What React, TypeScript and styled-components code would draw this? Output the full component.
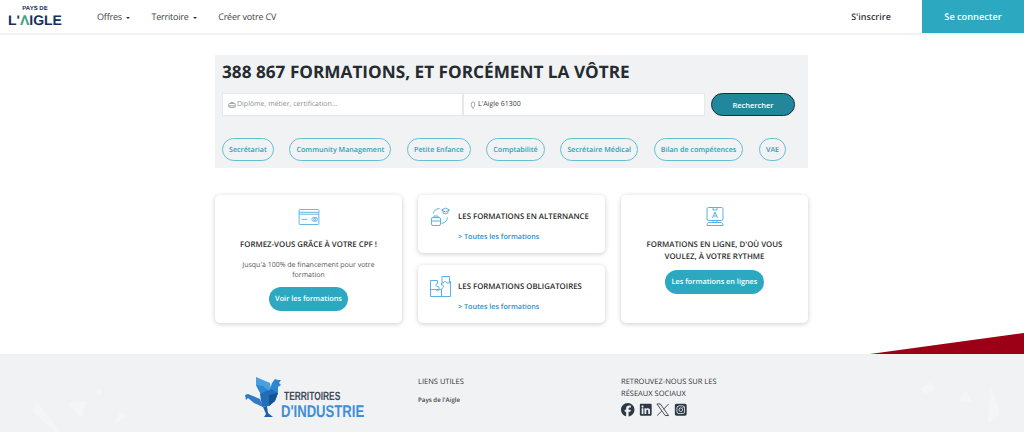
import * as React from "react";
import styled, { createGlobalStyle } from "styled-components";
import { FaFacebook, FaLinkedin, FaSquareInstagram } from "react-icons/fa6";

const GlobalStyle = createGlobalStyle`
  html, body {
    margin: 0;
    padding: 0;
    background: #ffffff;
    font-family: "Open Sans", "Liberation Sans", sans-serif;
    color: #2b2b2b;
    text-rendering: geometricPrecision;
  }
  * { box-sizing: border-box; }
`;

const Page = styled.div`
  width: 1024px;
  height: 432px;
  overflow: hidden;
  display: flex;
  flex-direction: column;
`;

const Header = styled.header`
  height: 35px;
  flex: none;
  display: flex;
  align-items: stretch;
  border-bottom: 2px solid #f3f3f3;
`;

const Logo = styled.div`
  width: 62px;
  padding: 6px 0 0 8px;
  display: flex;
  flex-direction: column;
  align-items: center;
  font-family: "Liberation Sans", sans-serif;
  font-weight: 700;
  color: #16305f;
`;

const LogoSmall = styled.span`
  font-size: 6px;
  line-height: 6px;
`;

const LogoBig = styled.span`
  font-size: 14px;
  line-height: 16px;
  white-space: nowrap;
`;

const LogoAccent = styled.span`
  color: #3fa37e;
`;

const Nav = styled.nav`
  display: flex;
  align-items: center;
  gap: 21.5px;
  margin-left: 35px;
  flex: 1;
`;

const NavItem = styled.a`
  font-size: 9px;
  letter-spacing: -0.2px;
  color: #444;
  display: flex;
  align-items: center;
  gap: 4px;
`;

const Caret = styled.i`
  width: 0;
  height: 0;
  margin-top: 2px;
  border-left: 2.5px solid transparent;
  border-right: 2.5px solid transparent;
  border-top: 2.5px solid #333;
`;

const SignUp = styled.a`
  width: 98px;
  padding-right: 4px;
  display: flex;
  align-items: center;
  justify-content: center;
  font-size: 9px;
  font-weight: 600;
  color: #333;
`;

const SignIn = styled.a`
  width: 102px;
  background: #2ca9c1;
  color: #ffffff;
  display: flex;
  align-items: center;
  justify-content: center;
  font-size: 9.2px;
  font-weight: 600;
`;

const Main = styled.main`
  width: 593px;
  margin: 20px 0 0 215px;
  display: flex;
  flex-direction: column;
  gap: 27px;
`;

const SearchPanel = styled.section`
  height: 113px;
  background: #f1f2f4;
  padding: 7px 7px 0;
  display: flex;
  flex-direction: column;
`;

const Title = styled.h1`
  margin: 0;
  height: 21px;
  font-size: 17.2px;
  line-height: 21px;
  font-weight: 700;
  color: #262b30;
  white-space: nowrap;
`;

const SearchRow = styled.div`
  margin-top: 10px;
  display: flex;
  align-items: center;
`;

const Field = styled.div<{ $w: number }>`
  width: ${(p) => p.$w}px;
  height: 23px;
  background: #ffffff;
  border: 1px solid #e6e8ea;
  padding-left: 5px;
  display: flex;
  align-items: center;
  gap: 1px;
  font-size: 7px;
`;

const FieldIcon = styled.svg`
  width: 8px;
  height: 8px;
  flex: none;
  fill: none;
  stroke: #8a8f94;
  stroke-width: 1;
`;

const Placeholder = styled.span`
  color: #8b8f93;
`;

const FieldValue = styled.span`
  color: #3c3c3c;
`;

const SearchButton = styled.button`
  width: 84px;
  height: 23px;
  margin-left: 6px;
  border: 1px solid #1d2d35;
  border-radius: 12px;
  background: #21889c;
  color: #ffffff;
  font-family: inherit;
  font-size: 7.5px;
  font-weight: 600;
  padding: 0;
`;

const Tags = styled.div`
  margin-top: 22px;
  display: flex;
  gap: 15.7px;
`;

const Tag = styled.a`
  height: 23px;
  padding: 0 6px;
  border: 1.2px solid #63bfd1;
  border-radius: 12px;
  display: flex;
  align-items: center;
  font-size: 7.15px;
  font-weight: 600;
  color: #2ca0b8;
  white-space: nowrap;
`;

const Cards = styled.section`
  display: grid;
  grid-template-columns: 187px 187px 187px;
  column-gap: 16px;
  height: 128px;
`;

const CardStack = styled.div`
  display: flex;
  flex-direction: column;
  justify-content: space-between;
`;

const Card = styled.article`
  background: #ffffff;
  border-radius: 5px;
  box-shadow: 0 1px 5px rgba(0, 0, 0, 0.2);
`;

const TallCard = styled(Card)<{ $top: number }>`
  padding-top: ${(p) => p.$top}px;
  display: flex;
  flex-direction: column;
  align-items: center;
`;

const SmallCard = styled(Card)`
  height: 58px;
  padding: 11px 0 0 12px;
  display: grid;
  grid-template-columns: 21px 1fr;
  column-gap: 7px;
`;

const CardIcon = styled.svg`
  display: block;
  fill: none;
  stroke: #58b2e6;
  stroke-width: 1;
`;

const CardTitle = styled.h3<{ $mt: number }>`
  margin: ${(p) => p.$mt}px 0 0;
  font-size: 7.85px;
  line-height: 12px;
  font-weight: 600;
  color: #2b2b2b;
  text-align: center;
`;

const CardText = styled.p`
  margin: 10px 0 0;
  width: 150px;
  font-size: 7px;
  line-height: 10px;
  color: #555;
  text-align: center;
`;

const Pill = styled.a<{ $mt: number }>`
  height: 24px;
  margin-top: ${(p) => p.$mt}px;
  padding: 0 6.5px;
  border-radius: 12px;
  background: #2ca9c1;
  color: #ffffff;
  display: flex;
  align-items: center;
  font-size: 7.3px;
  font-weight: 600;
`;

const SmallTitle = styled.h3`
  margin: 5px 0 0;
  font-size: 7.85px;
  line-height: 12px;
  font-weight: 600;
  color: #2b2b2b;
  white-space: nowrap;
`;

const SmallLink = styled.a`
  margin-top: 9px;
  display: block;
  font-size: 7.2px;
  line-height: 10px;
  font-weight: 600;
  color: #2a8fd0;
`;

const Footer = styled.footer`
  position: relative;
  margin-top: 31px;
  flex: 1;
  background: #f1f2f4;
`;

const Wedge = styled.svg`
  position: absolute;
  right: 0;
  top: -21px;
  display: block;
`;

const Facets = styled.svg`
  position: absolute;
  inset: 0;
`;

const FooterGrid = styled.div`
  position: relative;
  width: 593px;
  margin: 0 0 0 215px;
  padding-top: 23px;
  display: grid;
  grid-template-columns: 187px 187px 187px;
  column-gap: 16px;
`;

const Brand = styled.div`
  display: flex;
  align-items: flex-start;
  margin: 0 0 0 30px;
`;

const BrandText = styled.div`
  margin: 13px 0 0 -1px;
  font-family: "Liberation Sans", sans-serif;
  font-weight: 700;
  white-space: nowrap;
`;

const BrandTop = styled.div`
  margin-left: 3px;
  font-size: 12px;
  line-height: 12px;
  color: #3d4a57;
  transform: scaleX(0.7);
  transform-origin: left center;
`;

const BrandBottom = styled.div`
  font-size: 17px;
  line-height: 20.5px;
  color: #3f8fd6;
  transform: scaleX(0.77);
  transform-origin: left center;
`;

const FooterHead = styled.h4`
  margin: 0;
  font-size: 7.5px;
  line-height: 11.5px;
  font-weight: 400;
  color: #333;
`;

const FooterLink = styled.a`
  display: block;
  margin-top: 6px;
  font-size: 6.2px;
  line-height: 9px;
  font-weight: 600;
  color: #444;
`;

const Socials = styled.div`
  margin-top: 3px;
  display: flex;
  gap: 4px;
  font-size: 13.5px;
  color: #2d3a45;
`;

const XMark = styled.svg`
  width: 13.5px;
  height: 13.5px;
  fill: none;
  stroke: currentColor;
  stroke-width: 0.9;
`;

const tags = [
  "Secrétariat",
  "Community Management",
  "Petite Enfance",
  "Comptabilité",
  "Secrétaire Médical",
  "Bilan de compétences",
  "VAE",
];

const App: React.FC = () => {
  return (
    <Page>
      <GlobalStyle />
      <Header>
        <Logo>
          <LogoSmall>PAYS DE</LogoSmall>
          <LogoBig>
            L'<LogoAccent>Λ</LogoAccent>IGLE
          </LogoBig>
        </Logo>
        <Nav>
          <NavItem>
            Offres <Caret />
          </NavItem>
          <NavItem>
            Territoire <Caret />
          </NavItem>
          <NavItem>Créer votre CV</NavItem>
        </Nav>
        <SignUp>S'inscrire</SignUp>
        <SignIn>Se connecter</SignIn>
      </Header>

      <Main>
        <SearchPanel>
          <Title>388 867 FORMATIONS, ET FORCÉMENT LA VÔTRE</Title>
          <SearchRow>
            <Field $w={241}>
              <FieldIcon viewBox="0 0 10 10">
                <rect x="1" y="3" width="8" height="5" rx="1" />
                <path d="M3.5 3V2h3v1M1 6h8" />
              </FieldIcon>
              <Placeholder>Diplôme, métier, certification...</Placeholder>
            </Field>
            <Field $w={242}>
              <FieldIcon viewBox="0 0 10 10">
                <path d="M5 9.5C3.5 7 2.7 5.6 2.7 4a2.3 2.8 0 0 1 4.6 0C7.3 5.6 6.5 7 5 9.5z" />
              </FieldIcon>
              <FieldValue>L'Aigle 61300</FieldValue>
            </Field>
            <SearchButton>Rechercher</SearchButton>
          </SearchRow>
          <Tags>
            {tags.map((t) => (
              <Tag key={t}>{t}</Tag>
            ))}
          </Tags>
        </SearchPanel>

        <Cards>
          <TallCard $top={14}>
            <CardIcon width="22" height="16" viewBox="0 0 22 17">
              <rect x="0.5" y="0.5" width="21" height="16" rx="1" />
              <path d="M0.5 3.5h21M0.5 5.500h21M3 11h6" />
              <circle cx="16" cy="11" r="2" />
              <circle cx="18" cy="11" r="2" />
            </CardIcon>
            <CardTitle $mt={14}>FORMEZ-VOUS GRÂCE À VOTRE CPF !</CardTitle>
            <CardText>Jusqu'à 100% de financement pour votre formation</CardText>
            <Pill $mt={6}>Voir les formations</Pill>
          </TallCard>

          <CardStack>
            <SmallCard>
              <CardIcon width="21" height="21" viewBox="-0.5 0.5 21 21">
                <path d="M11 4.500l4-2 4 2-4 2zM12.500 5.500v2c1.500 1 3.500 1 5 0v-2" />
                <path d="M9 3C5 3.500 3.500 5 3 8M17 12c-.5 3-2 5-6 6" />
                <rect x="1" y="12" width="9" height="8" rx="1.500" />
                <path d="M3.500 12v-1.500h4V12M1 15.500h9" />
              </CardIcon>
              <div>
                <SmallTitle>LES FORMATIONS EN ALTERNANCE</SmallTitle>
                <SmallLink>&gt; Toutes les formations</SmallLink>
              </div>
            </SmallCard>
            <SmallCard>
              <CardIcon width="21" height="21" viewBox="0 0 21 21">
                <path d="M.5 4.500h7v3c-1.500-.5-2.500 2.500-.5 3 1 .2 1.500 0 2 .5v2.500H.5z" />
                <path d="M12 .5h7.500v6.500h-3c.5-2-3-2-3 0h-1.500z" />
                <path d="M.5 13.500h6c-.5 2 2.500 2 2.500 0h2.500v7H.5z" />
                <path d="M11.500 7v2c2-.5 3 2 1 3l-1 1.500v7h9V5.500h-1" />
              </CardIcon>
              <div>
                <SmallTitle>LES FORMATIONS OBLIGATOIRES</SmallTitle>
                <SmallLink>&gt; Toutes les formations</SmallLink>
              </div>
            </SmallCard>
          </CardStack>

          <TallCard $top={12}>
            <CardIcon width="18" height="20" viewBox="0 0 18 20">
              <rect x="1" y="0.5" width="16" height="13" rx="1.500" />
              <path d="M7 .5v2.500h4V.5M6.500 11L9 5l2.500 6M7.500 9h3M7 13.500v2h4v-2M1 18.500c0-2 1-3 2-3h12c1 0 2 1 2 3z" />
            </CardIcon>
            <CardTitle $mt={12}>
              FORMATIONS EN LIGNE, D'OÙ VOUS
              <br />
              VOULEZ, À VOTRE RYTHME
            </CardTitle>
            <Pill $mt={7}>Les formations en lignes</Pill>
          </TallCard>
        </Cards>
      </Main>

      <Footer>
        <Wedge width="154" height="21" viewBox="0 0 154 21">
          <polygon points="0,21 154,0 154,21" fill="#9b0017" />
        </Wedge>
        <Facets width="1024" height="78" viewBox="0 0 1024 78">
          <g fill="#f4f5f6">
            <polygon points="37,47 32,57 55,78 60,78" />
            <polygon points="68,50 86,47 82,64" />
            <polygon points="120,58 128,62 114,70" />
            <circle cx="99" cy="38" r="3" />
            <polygon points="920,35 930,28 936,36 925,40" />
            <polygon points="966,36 972,48 958,48" />
            <polygon points="990,30 1000,60 988,70" />
          </g>
        </Facets>
        <FooterGrid>
          <Brand>
            <svg width="37" height="41" viewBox="0 0 37 41">
              {/* wing feathers */}
              <polygon points="11,0 25,6 26,12 16,17 11,8" fill="#4a9fe0" />
              <polygon points="11,8 18,9 24,14 16,18" fill="#2f86d0" />
              {/* neck, head and comb */}
              <polygon points="25,12 27,6 30,2 33,3 36,3 34,6 36,8 33,10 33,16 27,20" fill="#2f86d0" />
              {/* body */}
              <polygon points="15,17 26,12 33,16 30,24 24,29 17,30" fill="#1f6dbb" />
              <polygon points="24,18 33,16 30,24 24,29" fill="#17558f" />
              {/* tail leg stretched out */}
              <polygon points="0,18 3,17 15,22 18,30 9,26 3,21 1,23" fill="#2f7cc4" />
              {/* standing leg */}
              <polygon points="18,30 22,29 23,36 28,40 19,40 21,37" fill="#1f5fa8" />
            </svg>
            <BrandText>
              <BrandTop>TERRITOIRES</BrandTop>
              <BrandBottom>D'INDUSTRIE</BrandBottom>
            </BrandText>
          </Brand>
          <div>
            <FooterHead>LIENS UTILES</FooterHead>
            <FooterLink>Pays de l'Aigle</FooterLink>
          </div>
          <div>
            <FooterHead>
              RETROUVEZ-NOUS SUR LES
              <br />
              RÉSEAUX SOCIAUX
            </FooterHead>
            <Socials>
              <FaFacebook />
              <FaLinkedin />
              <XMark viewBox="0 0 14 14">
                <path d="M1 1h3.500l8.500 12H9.500z" />
                <path d="M13 1L7.800 6.500M6 8.300L1.200 13" />
              </XMark>
              <FaSquareInstagram />
            </Socials>
          </div>
        </FooterGrid>
      </Footer>
    </Page>
  );
};

export default App;
